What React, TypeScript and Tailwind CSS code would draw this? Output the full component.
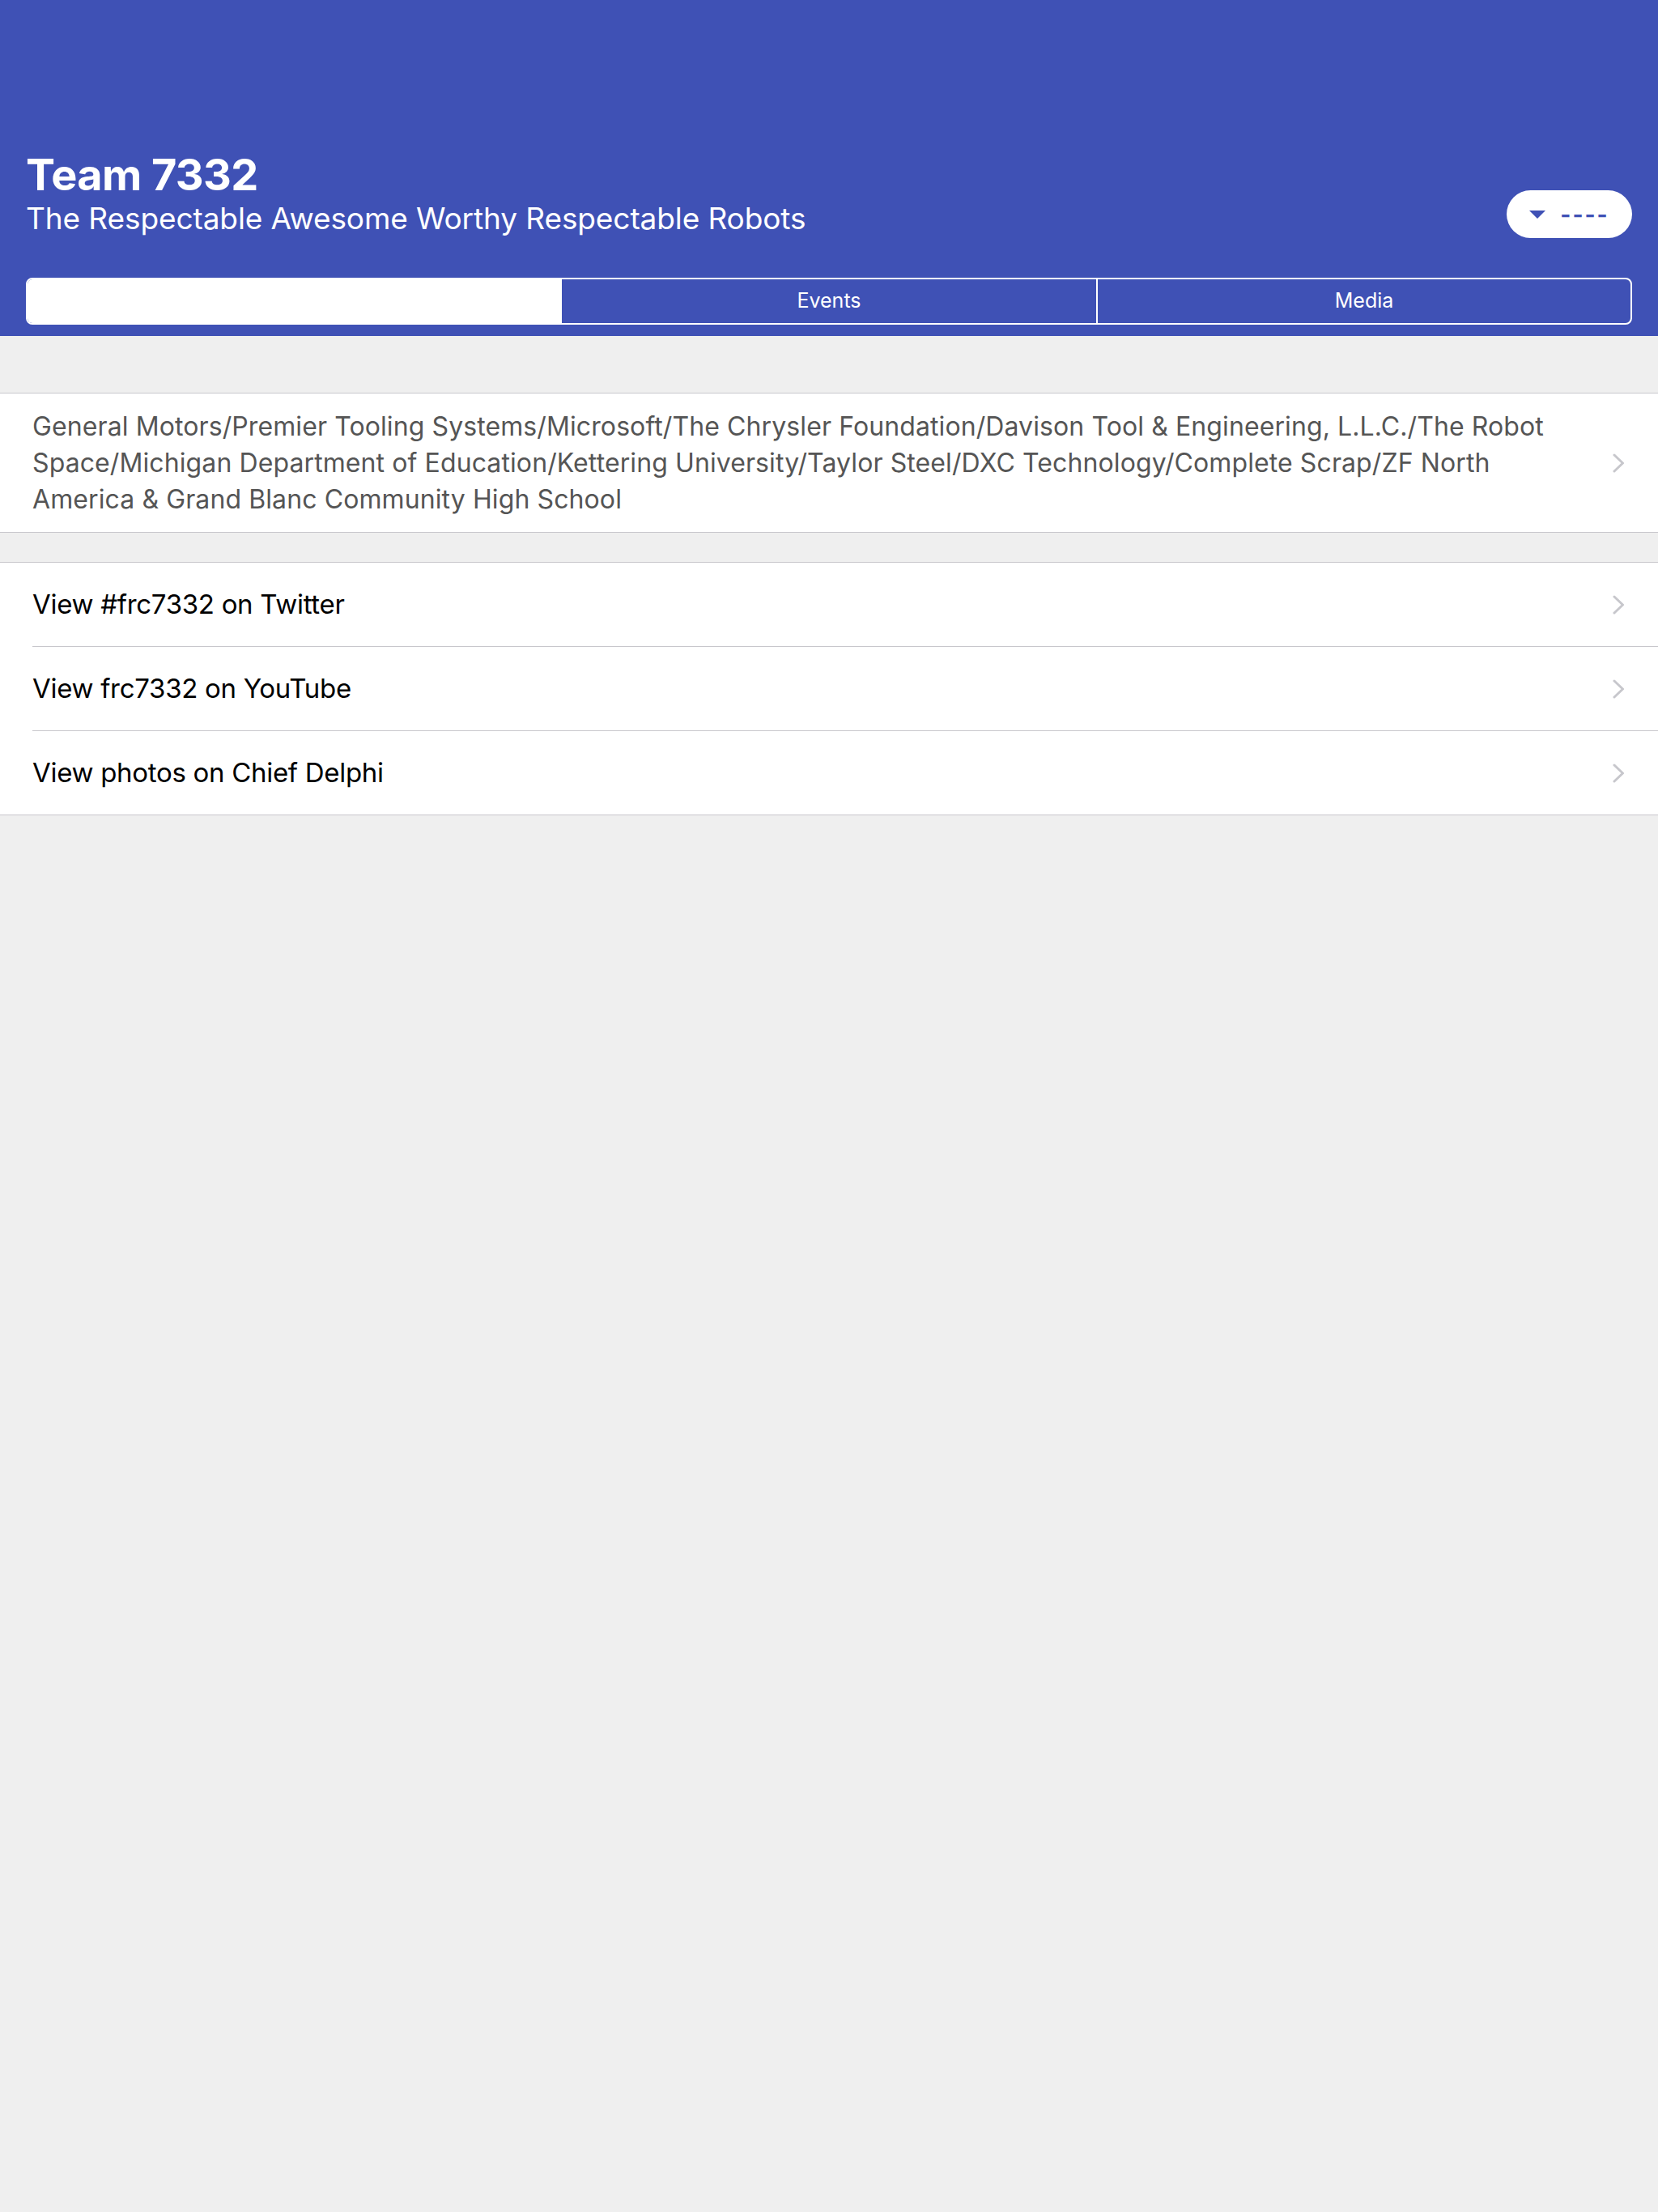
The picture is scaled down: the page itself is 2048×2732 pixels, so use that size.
import React from 'react';

const sponsors =
  'General Motors/Premier Tooling Systems/Microsoft/The Chrysler Foundation/Davison Tool & Engineering, L.L.C./The Robot Space/Michigan Department of Education/Kettering University/Taylor Steel/DXC Technology/Complete Scrap/ZF North America & Grand Blanc Community High School';

const links = ['View #frc7332 on Twitter', 'View frc7332 on YouTube', 'View photos on Chief Delphi'];

function Chevron() {
  return (
    <svg width="15" height="24" viewBox="0 0 15 24" className="shrink-0">
      <path d="M2 2 L12.5 12 L2 22" fill="none" stroke="#c7c7cc" strokeWidth="3" strokeLinecap="round" strokeLinejoin="round" />
    </svg>
  );
}

export default function App() {
  return (
    <div className="min-h-[2732px] bg-[#efefef] font-['Inter','Noto_Sans',sans-serif]">
      {/* Header */}
      <header className="h-[415px] bg-[#3f51b5] px-[32px] pb-[14px] flex flex-col justify-end">
        <div className="flex items-end justify-between">
          <div className="text-white">
            <h1 className="text-[54px] leading-[65px] font-bold tracking-[-0.6px]">Team 7332</h1>
            <p className="text-[37px] leading-[44px] tracking-[-0.1px]">The Respectable Awesome Worthy Respectable Robots</p>
          </div>
          <button className="h-[59px] w-[155px] rounded-full bg-white flex items-center justify-center gap-[18px] mb-[-2px]">
            <svg width="20" height="10" viewBox="0 0 20 10">
              <path d="M0 0 H20 L10 10 Z" fill="#3f51b5" />
            </svg>
            <span className="text-[28px] leading-none font-bold text-[#3f51b5] tracking-[2px]">----</span>
          </button>
        </div>

        {/* Segmented control */}
        <div className="mt-[51px] h-[58px] grid grid-cols-3 border-2 border-white rounded-[8px] overflow-hidden">
          <div className="bg-white" />
          <div className="flex items-center justify-center text-white text-[25px]">Events</div>
          <div className="border-l-2 border-white flex items-center justify-center text-white text-[25px]">Media</div>
        </div>
      </header>

      {/* Sponsors */}
      <section className="mt-[70px] bg-white border-y border-[#c8c7cc]">
        <div className="flex items-center pl-[40px] pr-[41px] py-[18px] gap-[40px]">
          <p className="flex-1 text-[32px] leading-[45px] text-[#555555] tracking-[0.1px]">{sponsors}</p>
          <Chevron />
        </div>
      </section>

      {/* Links */}
      <section className="mt-[36px] bg-white border-y border-[#c8c7cc]">
        {links.map((label, i) => (
          <div key={label} className="pl-[40px]">
            <div
              className={`h-[103px] flex items-center justify-between pr-[41px] ${
                i < links.length - 1 ? 'border-b border-[#c8c7cc] h-[104px]' : ''
              }`}
            >
              <span className="text-[33px] text-black tracking-[-0.3px]">{label}</span>
              <Chevron />
            </div>
          </div>
        ))}
      </section>
    </div>
  );
}
